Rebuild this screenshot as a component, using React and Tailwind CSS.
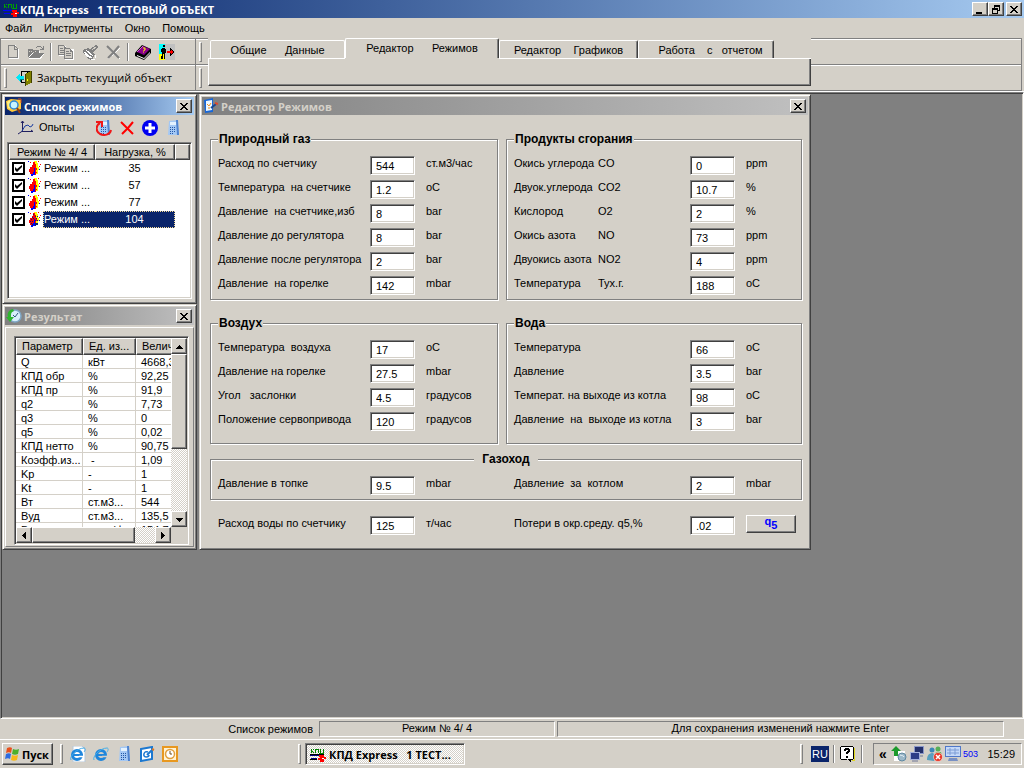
import React, { useState } from 'react';
import clsx from 'clsx';

const raised =
  'border border-t-white border-l-white border-b-[#404040] border-r-[#404040] shadow-[inset_-1px_-1px_0_#808080] bg-[#d4d0c8]';
const sunken =
  'border border-t-[#808080] border-l-[#808080] border-b-white border-r-white shadow-[inset_1px_1px_0_#404040,inset_-1px_-1px_0_#d4d0c8]';
const thinSunken = 'border border-t-[#808080] border-l-[#808080] border-b-white border-r-white';
const dither = 'bg-[repeating-conic-gradient(#ffffff_0_25%,#d4d0c8_0_50%)] bg-[length:2px_2px]';
const uiBold = "font-['Open_Sans','Noto_Sans',sans-serif] font-bold text-[11px]";

const gasFields = [
  { label: 'Расход по счетчику', value: '544', unit: 'ст.м3/час' },
  { label: 'Температура  на счетчике', value: '1.2', unit: 'oC' },
  { label: 'Давление  на счетчике,изб', value: '8', unit: 'bar' },
  { label: 'Давление до регулятора', value: '8', unit: 'bar' },
  { label: 'Давление после регулятора', value: '2', unit: 'bar' },
  { label: 'Давление  на горелке', value: '142', unit: 'mbar' },
];

const combustionFields = [
  { label: 'Окись углерода', formula: 'CO', value: '0', unit: 'ppm' },
  { label: 'Двуок.углерода', formula: 'CO2', value: '10.7', unit: '%' },
  { label: 'Кислород', formula: 'O2', value: '2', unit: '%' },
  { label: 'Окись азота', formula: 'NO', value: '73', unit: 'ppm' },
  { label: 'Двуокись азота', formula: 'NO2', value: '4', unit: 'ppm' },
  { label: 'Температура', formula: 'Тух.г.', value: '188', unit: 'oC' },
];

const airFields = [
  { label: 'Температура  воздуха', value: '17', unit: 'oC' },
  { label: 'Давление на горелке', value: '27.5', unit: 'mbar' },
  { label: 'Угол   заслонки', value: '4.5', unit: 'градусов' },
  { label: 'Положение сервопривода', value: '120', unit: 'градусов' },
];

const waterFields = [
  { label: 'Температура', value: '66', unit: 'oC' },
  { label: 'Давление', value: '3.5', unit: 'bar' },
  { label: 'Температ. на выходе из котла', value: '98', unit: 'oC' },
  { label: 'Давление  на  выходе из котла', value: '3', unit: 'bar' },
];

const results = [
  ['Q', 'кВт', '4668,3'],
  ['КПД обр', '%', '92,25'],
  ['КПД пр', '%', '91,9'],
  ['q2', '%', '7,73'],
  ['q3', '%', '0'],
  ['q5', '%', '0,02'],
  ['КПД нетто', '%', '90,75'],
  ['Коэфф.из...', ' -', '1,09'],
  ['Kp', '-', '1'],
  ['Kt', '-', '1'],
  ['Вт', 'ст.м3...', '544'],
  ['Вуд', 'ст.м3...', '135,5'],
  ['Ву', 'кг у.т/ф', '154,7'],
];

/* ---------- icons ---------- */

const Svg = ({ children, size = 16, crisp = true }) => (
  <svg
    width={size}
    height={size}
    viewBox="0 0 16 16"
    fill="none"
    shapeRendering={crisp ? 'crispEdges' : 'auto'}
    className="shrink-0"
    aria-hidden="true"
  >
    {children}
  </svg>
);

const AppIcon = ({ dark }) => (
  <Svg>
    <path d="M1 3v4M1 5h2M3 3v1M3 6v1M5 7V3h3v4M10 3v4M13 3v4M9 7h5" stroke={dark ? '#008000' : '#00a000'} />
    <path d="M0 10l3-1 3 1 3-1M1 12h6" stroke={dark ? '#000080' : '#0000ff'} />
    <path d="M9 9h5v2h2v2h-2v3h-4v-2H8v-2h2z" fill="#ff0000" />
    <path d="M12 12h2v1h-2z" fill="#fff" />
    {dark && <path d="M0 8h14M0 13h7" stroke="#000" />}
  </Svg>
);

const NewIcon = () => (
  <Svg>
    <path d="M3 1.500h7M12.500 5v9.500H3" stroke="#fff" />
    <path d="M2 1h7v1H3v11h8V5h1v9H2zM8 2h1v3h3v1H8zM9 2h1v1H9zM10 3h1v1h-1zM11 4h1v1h-1z" fill="#808080" />
  </Svg>
);

const OpenIcon = () => (
  <Svg>
    <path d="M1 15V6h4l1 1h6v3h4l-3 5z" fill="#fff" />
    <path d="M0 14V5h4l1 1h6v3H4z" fill="#808080" />
    <path d="M1 14l4-5h11l-4 5z" fill="#808080" />
    <path d="M1 7h1v1H1zM3 7h1v1H3zM5 8h1v1H5zM7 7h1v1H7z" fill="#d4d0c8" />
    <path d="M8 3h1V2h4v1h1v1h1V2h1v4h-4V5h2V4h-1V3H9v1H8z" fill="#808080" />
  </Svg>
);

const CopyIcon = () => (
  <Svg>
    <path d="M1 2h7v10H1zM7 5h9v11H7z" fill="#fff" />
    <path d="M0 1h6v1h1v1h1v8H0z" fill="#808080" />
    <path d="M1 2h5v2h1v6H1z" fill="#d4d0c8" />
    <path d="M2 4h3v1H2zM2 6h4v1H2zM2 8h4v1H2z" fill="#808080" />
    <path d="M6 4h6v1h1v1h1v1h1v8H6z" fill="#808080" />
    <path d="M7 5h5v3h2v6H7z" fill="#d4d0c8" />
    <path d="M8 7h3v1H8zM8 9h5v1H8zM8 11h5v1H8z" fill="#808080" />
  </Svg>
);

const BrushIcon = () => (
  <Svg>
    <path d="M14 1l2 2-5 6-3-4z" fill="#808080" />
    <path d="M14 3l-4 3" stroke="#d4d0c8" />
    <path d="M1 6l5-2 7 6-3 6-4-1-2-4-3-2z" fill="#808080" />
    <path d="M2 8l8 6M4 6l7 6M3 10l5 4" stroke="#fff" />
    <path d="M9 15h4v1H9zM13 11h1v3h-1z" fill="#fff" />
  </Svg>
);

const CrossIcon = ({ color = '#808080', light }) => (
  <Svg>
    {light && <path d="M3 4l12 11M15 4L3 15" stroke="#fff" />}
    <path d="M2 2l12 12M14 2L9 8l-6 6" stroke={color} strokeWidth="2" shapeRendering="auto" />
  </Svg>
);

const BookIcon = () => (
  <Svg crisp={false}>
    <path d="M0 9l7-8 9 4v4l-7 7-9-4z" fill="#000" />
    <path d="M2 8l6-6 7 3-6 6z" fill="#8a008a" />
    <path d="M2 11l7 3 6-6v1l-6 6-7-3z" fill="#fff" />
    <path d="M2 8l6-6" stroke="#d060d0" />
    <path d="M8 4h2v2H9v1M8 8h1" stroke="#ffff00" />
  </Svg>
);

const ExitIcon = () => (
  <Svg>
    <path d="M0 0h6v10H0z" fill="#00ffff" />
    <path d="M0 10h6v6H0z" fill="#ffff00" />
    <path d="M6 0h10v16H6z" fill="#c0c0c0" />
    <path d="M4 1h2v2H4zM3 4h3v1h1v4H6v1H3zM2 5h1v3H2zM3 10h1v5H2v-3h1zM5 10h1v5H5z" fill="#000" />
    <path d="M8 7h3V4h1v1h1v1h1v1h1v2h-1v1h-1v1h-1v1h-1V9H8z" fill="#000" />
    <path d="M8 7h4V6h1v1h1v2h-1v1h-1V9H8z" fill="#ff0000" />
  </Svg>
);

const DoorIcon = () => (
  <Svg>
    <path d="M5 1h11v12H5z" fill="#000" />
    <path d="M6 2h5v10H6z" fill="#d4d0c8" />
    <path d="M9 4l6-3v12l-6 3z" fill="#808000" />
    <path d="M9 4h1v12H9zM15 1h1v12h-1z" fill="#404000" />
    <path d="M11 9h1v2h-1z" fill="#ffff00" />
    <path d="M0 7h1V6h1V5h1V4h1v2h4v3H4v2H3v-1H2V9H1V8H0z" fill="#00e8f8" />
    <path d="M4 9h4v1H5v2H4z" fill="#008080" />
  </Svg>
);

const CurveIcon = () => (
  <Svg crisp={false}>
    <path d="M4.500 1v10L0 14M4 11.500h11M3 3l1.500-2L6 3M13 10l2 1.500" stroke="#202060" />
    <path d="M4 11l3-5 3-1 2 2 2-1 1-2" stroke="#2040a0" />
  </Svg>
);

const CalcIcon = ({ refresh }) => (
  <Svg crisp={false}>
    <path d="M4 1l9-1 1 15H3z" fill="#a4c8f4" />
    <path d="M11 0h2l1 15h-2z" fill="#4f83cf" />
    <path d="M5 2h6v3H5z" fill="#e4f2ff" />
    <path d="M5 7h1v1H5zM7 7h1v1H7zM9 7h1v1H9zM5 9h1v1H5zM7 9h1v1H7zM9 9h1v1H9zM5 11h1v1H5zM7 11h1v1H7zM9 11h1v1H9zM5 13h1v1H5zM7 13h1v1H7z" fill="#2458a8" />
    {refresh && (
      <>
        <path d="M4 3C0 5-1 11 4 14c4 2 10 1 11-4" stroke="#f01818" strokeWidth="2" />
        <path d="M0 2h6v5" stroke="#f01818" strokeWidth="2" />
      </>
    )}
  </Svg>
);

const PlusIcon = () => (
  <Svg crisp={false}>
    <circle cx="8" cy="8" r="8" fill="#0000f0" />
    <path d="M8 3v10M3 8h10" stroke="#fff" strokeWidth="3" />
  </Svg>
);

const FlameIcon = ({ selected }) => (
  <Svg>
    <path d="M2 1h1v1H2zM10 0h1v1h-1zM4 4h1v1H4zM11 5h1v1h-1zM12 3h1v1h-1z" fill="#ff0000" />
    <path d="M0 0h1v1H0zM5 1h1v1H5zM3 6h1v1H3zM11 8h1v1h-1z" fill="#0000ff" />
    <path d="M6 0h3v2h1v4h1v3h-1v4H8V6H7V3H6z" fill="#ffff00" />
    <path d="M5 1h2v2h1v4h1v5H8v2H3v-1H2v-2H1V8h1V6h2V4h1z" fill="#ff0000" />
    <path d="M6 7h1v7H5v-3h1zM3 13h2v2H3z" fill="#0000ff" />
    <path d="M8 9h1v2H8z" fill="#ffff00" />
    {selected && (
      <path
        d="M5 2h1v1H5zM7 4h1v1H7zM9 4h1v1H9zM4 5h1v1H4zM8 6h1v1H8zM3 7h1v1H3zM5 6h1v1H5zM9 8h1v1H9zM2 9h1v1H2zM4 9h1v1H4zM3 11h1v1H3zM7 8h1v1H7zM8 11h2v2H8zM7 11h1v3H7zM4 12h1v2H4z"
        fill="#0a246a"
      />
    )}
  </Svg>
);

const FolderSearchIcon = () => (
  <Svg crisp={false}>
    <path d="M0 3l5-2 10 1v9l-9 3-5-3z" fill="#ffc83a" />
    <path d="M1 4l3-2v9l-2-1z" fill="#fff080" />
    <circle cx="8" cy="7" r="4" fill="#c8f4ff" stroke="#2b88d8" strokeWidth="1.500" />
    <path d="M11 10l3 5" stroke="#904010" strokeWidth="2" />
    <path d="M12 1h3v4" stroke="#d05020" />
  </Svg>
);

const ClockIcon = () => (
  <Svg crisp={false}>
    <circle cx="9" cy="8" r="6" fill="#d8eefa" stroke="#7ea6c4" strokeWidth="1.500" />
    <path d="M12 5L9 9 7 7" stroke="#305878" />
    <path d="M7 1C2 2 1 6 2 9H0l4 5 4-5H5C5 6 5 4 8 3z" fill="#2fb52f" />
  </Svg>
);

const EditorIcon = () => (
  <Svg crisp={false}>
    <path d="M1 2l9-2v14l-8 1z" fill="#1767d8" />
    <path d="M3 3l6-1v10l-6 1z" fill="#eef8ff" />
    <path d="M4 6l2 2 2-3M5 10h2" stroke="#f09020" />
    <path d="M8 10l5-4" stroke="#1a4890" strokeWidth="2" />
    <path d="M12 5l3 1" stroke="#e04828" strokeWidth="2" />
  </Svg>
);

const WindowsIcon = () => (
  <Svg crisp={false}>
    <path d="M2 2c2-1 4-1 5 0L6 7C5 6 3 6 1 7z" fill="#e8501c" />
    <path d="M8 3c2 1 4 1 6 0l-1 5c-2 1-4 1-6 0z" fill="#4cb02c" />
    <path d="M1 8c2-1 4-1 5 0l-1 5c-1-1-3-1-5 0z" fill="#2c6ce0" />
    <path d="M7 9c2 1 4 1 6 0l-1 5c-2 1-4 1-6 0z" fill="#f8b818" />
  </Svg>
);

const IeIcon = ({ page }) => (
  <Svg crisp={false}>
    {page && <path d="M3 0h9l3 3v13H3z" fill="#fff" stroke="#b8c8d8" />}
    <circle cx={page ? 7 : 8} cy="9" r="4.500" stroke="#1f86dc" strokeWidth="3" />
    <path d="M3 8h10v2H3z" fill="#1f86dc" />
    <path d="M9 10.500h5" stroke={page ? '#fff' : '#d4d0c8'} strokeWidth="1.500" />
    <path d="M1 14C-1 11 7 2 14 2c2 0 1 3 0 4" stroke={page ? '#3fa8e8' : '#48b0e8'} />
  </Svg>
);

const OutlookIcon = () => (
  <Svg crisp={false}>
    <path d="M2 3l11-2v12L2 15z" fill="#fff" stroke="#1c78d0" strokeWidth="2" />
    <path d="M9 6C5 4 3 11 7 11c2 0 3-1 3-2" stroke="#1c78d0" strokeWidth="1.500" />
    <path d="M8 9l5-5" stroke="#1c78d0" strokeWidth="2" />
    <path d="M13 3l2 1" stroke="#e07820" strokeWidth="2" />
  </Svg>
);

const OrangeClockIcon = () => (
  <Svg crisp={false}>
    <path d="M1 1h14v14H1z" fill="#fff3d4" stroke="#e89820" strokeWidth="2" />
    <circle cx="8" cy="8" r="4.500" fill="#fff" stroke="#e0a040" strokeWidth="1.500" />
    <path d="M8 5v3h2" stroke="#705020" />
  </Svg>
);

const UpdateIcon = () => (
  <Svg crisp={false}>
    <path d="M3 5h11v10H3z" fill="#fff" />
    <path d="M5 0l5 5H7v5H3V5H0z" fill="#1c9a2c" />
    <circle cx="11" cy="11" r="4" fill="#9cb8c8" stroke="#6088a0" />
    <path d="M9 9c2 1 3 0 4 2" stroke="#e8f4fa" />
  </Svg>
);

const NetworkIcon = () => (
  <Svg crisp={false}>
    <path d="M5 0h10v8H5z" fill="#8c98c8" />
    <path d="M6 1h8v6H6z" fill="#24306c" />
    <path d="M1 6h10v8H1z" fill="#a4b0dc" />
    <path d="M2 7h8v6H2z" fill="#2c3c88" />
    <path d="M3 15h6M11 10h3" stroke="#707898" />
  </Svg>
);

const MessengerIcon = () => (
  <Svg crisp={false}>
    <circle cx="11" cy="3" r="2.500" fill="#58b058" />
    <path d="M7 10l2-4 5 0 1 5z" fill="#58b058" />
    <circle cx="5" cy="4" r="2.500" fill="#3c88b8" />
    <path d="M0 14c0-6 3-7 6-7l3 3-2 5z" fill="#58a0c0" />
    <circle cx="11" cy="11" r="4.500" fill="#e83828" stroke="#fff" strokeWidth="0.500" />
    <path d="M9 9l4 4M13 9l-4 4" stroke="#fff" strokeWidth="1.500" />
  </Svg>
);

const ScreenIcon = () => (
  <Svg crisp={false}>
    <path d="M0 0h16v11H0z" fill="#5078c8" />
    <path d="M1 1h14v9H1z" fill="#c4d8f8" />
    <path d="M2 4h12M2 7h12M5 2v7M10 2v7" stroke="#7c9cd4" />
    <path d="M4 12h8l1 3H3z" fill="#7890c4" />
  </Svg>
);

const HelpIcon = () => (
  <Svg>
    <path d="M1 1h12v12h-3v3L7 13H1z" fill="#fff" />
    <path d="M1 0h12v1H1zM0 1h1v12H0zM1 13h6v1H1zM13 1h1v12h-1zM10 13h3v1h-2v2h-1v-1H9v-1H8v-1h2z" fill="#000" />
    <path d="M14 2h1v13h-3v-1h2z" fill="#e0d820" />
    <path d="M4 3h1V2h4v1h1v3H9v1H8v1H6V6h1V5h1V4H6v1H4zM6 10h2v2H6z" fill="#000" />
  </Svg>
);

/* ---------- shared parts ---------- */

const CaptionButton = ({ label, children }) => (
  <button aria-label={label} className={clsx('flex items-center justify-center w-4 h-3.5', raised)}>
    <svg width="10" height="9" viewBox="0 0 10 9" fill="none" stroke="#000" shapeRendering="crispEdges" aria-hidden="true">
      {children}
    </svg>
  </button>
);

const closeGlyph = (
  <path
    d="M1 1h2v1h1v1h2V2h1V1h2v1H8v1H7v1H6v1h1v1h1v1h1v1H7V7H6V6H4v1H3v1H1V7h1V6h1V5h1V4H3V3H2V2H1z"
    fill="#000"
    stroke="none"
  />
);

const ToolWindow = ({ title, icon, active, className, children }) => (
  <section
    className={clsx(
      'flex flex-col p-0.5 bg-[#d4d0c8] border border-t-[#d4d0c8] border-l-[#d4d0c8] border-b-[#404040] border-r-[#404040] shadow-[inset_1px_1px_0_#fff,inset_-1px_-1px_0_#808080]',
      className
    )}
  >
    <header
      className={clsx(
        'flex items-center h-[18px] pl-px pr-0.5 gap-0.5 bg-linear-to-r shrink-0',
        active ? 'from-[#0a246a] to-[#a6caf0] text-white' : 'from-[#808080] to-[#c0c0c0] text-[#d4d0c8]'
      )}
    >
      {icon}
      <h2 className={clsx('flex-1 whitespace-pre', uiBold)}>{title}</h2>
      <CaptionButton label="Закрыть">{closeGlyph}</CaptionButton>
    </header>
    {children}
  </section>
);

const Grip = ({ className }) => (
  <div className={clsx('w-[3px] border border-t-white border-l-white border-b-[#808080] border-r-[#808080]', className)} />
);

const Separator = () => <div className="w-0.5 h-[18px] bg-white border-l border-[#808080]" />;

const ToolButton = ({ label, children }) => (
  <button aria-label={label} title={label} className="flex items-center">
    {children}
  </button>
);

const Field = ({ id, label, formula, value, unit, wide, children }) => {
  const [text, setText] = useState(value);
  return (
    <div className={clsx('grid h-6 items-center', wide ? 'grid-cols-[176px_45px_1fr]' : 'grid-cols-[152px_45px_1fr]')}>
      <label htmlFor={id} className="flex whitespace-pre">
        <span className={clsx(formula && 'w-[84px]')}>{label}</span>
        {formula}
      </label>
      <input
        id={id}
        value={text}
        onChange={(e) => setText(e.target.value)}
        className={clsx('self-end w-full h-[19px] pl-[5px] bg-white outline-none', sunken)}
      />
      {children || <span className="pl-[11px]">{unit}</span>}
    </div>
  );
};

const Group = ({ title, center, className, children }) => (
  <fieldset
    className={clsx(
      'min-w-0 px-[7px] border border-[#808080] shadow-[1px_1px_0_#fff,inset_1px_1px_0_#fff]',
      className
    )}
  >
    <legend className={clsx('h-3.5 leading-3.5 font-bold text-[12px] bg-[#d4d0c8]', center ? 'mx-auto px-2' : 'px-px')}>
      {title}
    </legend>
    {children}
  </fieldset>
);

const Arrow = ({ dir }) => {
  const shapes = {
    up: 'M3 0h1v1h1v1h1v1h1v1H0V3h1V2h1V1h1z',
    down: 'M0 0h7v1H6v1H5v1H4v1H3V3H2V2H1V1H0z',
    left: 'M3 0h1v7H3V6H2V5H1V4H0V3h1V2h1V1h1z',
    right: 'M0 0h1v1h1v1h1v1h1v1H3v1H2v1H1v1H0z',
  };
  return (
    <svg width="7" height="7" viewBox={dir === 'up' || dir === 'down' ? '0 -2 7 7' : '-1 0 7 7'} shapeRendering="crispEdges" aria-hidden="true">
      <path d={shapes[dir]} fill="#000" />
    </svg>
  );
};

const ScrollButton = ({ dir, label }) => (
  <button aria-label={label} className={clsx('flex items-center justify-center size-4 shrink-0', raised)}>
    <Arrow dir={dir} />
  </button>
);

/* ---------- windows ---------- */

const ModesWindow = () => {
  const [modes, setModes] = useState([
    { load: 35, checked: true },
    { load: 57, checked: true },
    { load: 77, checked: true },
    { load: 104, checked: true },
  ]);
  const [selected, setSelected] = useState(3);

  const toggle = (index) =>
    setModes(modes.map((m, i) => (i === index ? { ...m, checked: !m.checked } : m)));

  return (
    <ToolWindow title="Список режимов" icon={<FolderSearchIcon />} active className="h-[210px]">
      <div className="flex items-center h-[25px] pl-[13px]">
        <button className="flex items-center gap-[5px] w-[78px]">
          <CurveIcon />
          Опыты
        </button>
        <div className="flex items-center gap-[7px]">
          <ToolButton label="Пересчитать"><CalcIcon refresh /></ToolButton>
          <ToolButton label="Удалить"><CrossIcon color="#ff0000" /></ToolButton>
          <ToolButton label="Добавить"><PlusIcon /></ToolButton>
          <ToolButton label="Калькулятор"><CalcIcon /></ToolButton>
        </div>
      </div>
      <div className={clsx('flex-1 mx-0.5 mt-0.5 mb-0.5 p-px bg-white overflow-hidden', sunken)}>
        <table className="w-full table-fixed border-separate border-spacing-0">
          <colgroup>
            <col className="w-[34px]" />
            <col className="w-[52px]" />
            <col className="w-20" />
            <col />
          </colgroup>
          <thead>
            <tr className="h-4">
              <th colSpan="2" className={clsx('p-0 font-normal', raised)}>Режим № 4/ 4</th>
              <th className={clsx('p-0 font-normal', raised)}>Нагрузка, %</th>
              <th className={clsx('p-0', raised)} />
            </tr>
          </thead>
          <tbody>
            {modes.map((mode, i) => {
              const on = i === selected;
              return (
                <tr key={mode.load} onClick={() => setSelected(i)} className="h-[17px]">
                  <td className="p-0">
                    <div className="flex items-center pl-[3px] gap-[3px]">
                      <input
                        type="checkbox"
                        aria-label={`Режим ${i + 1}`}
                        checked={mode.checked}
                        onChange={() => toggle(i)}
                        className="appearance-none size-[13px] shrink-0 border-2 border-black bg-white checked:bg-[url('data:image/svg+xml,%3Csvg%20xmlns=%22http://www.w3.org/2000/svg%22%20viewBox=%220%200%209%209%22%3E%3Cpath%20d=%22M1%203v3l2%202%205-5V1L3%205z%22/%3E%3C/svg%3E')]"
                      />
                      <FlameIcon selected={on} />
                    </div>
                  </td>
                  <td className={clsx('p-0 border border-r-0', on ? 'bg-[#0a246a] text-white border-dotted border-[#f5db95]' : 'border-transparent')}>
                    Режим ...
                  </td>
                  <td className={clsx('p-0 border border-l-0 text-center', on ? 'bg-[#0a246a] text-white border-dotted border-[#f5db95]' : 'border-transparent')}>
                    {mode.load}
                  </td>
                  <td className="p-0" />
                </tr>
              );
            })}
          </tbody>
        </table>
      </div>
    </ToolWindow>
  );
};

const ResultWindow = () => (
  <ToolWindow title="Результат" icon={<ClockIcon />} className="flex-1">
    <div className="flex-1 flex mt-0.5 pt-2 pl-2 pr-1 border border-t-white border-l-white border-b-[#808080] border-r-[#808080]">
      <div className={clsx('flex-1 min-w-0 flex flex-col p-px h-[209px] bg-white', sunken)}>
        <div className="flex flex-1 min-h-0">
          <div className="flex-1 min-w-0 overflow-hidden">
            <table className="w-[204px] table-fixed border-separate border-spacing-0">
              <colgroup>
                <col className="w-[67px]" />
                <col className="w-[53px]" />
                <col className="w-[84px]" />
              </colgroup>
              <thead>
                <tr className="h-[17px]">
                  <th className={clsx('p-0 pl-[5px] font-normal text-left', raised)}>Параметр</th>
                  <th className={clsx('p-0 pl-[5px] font-normal text-left', raised)}>Ед. из...</th>
                  <th className={clsx('p-0 pl-[5px] font-normal text-left', raised)}>Величина</th>
                </tr>
              </thead>
              <tbody>
                {results.map((row) => (
                  <tr key={row[0]} className="h-3.5 leading-3">
                    {row.map((cell, i) => (
                      <td key={i} className="p-0 pl-[5px] whitespace-pre border-b border-r border-[#d4d0c8]">
                        {cell}
                      </td>
                    ))}
                  </tr>
                ))}
              </tbody>
            </table>
          </div>
          <div className={clsx('flex flex-col w-4', dither)}>
            <ScrollButton dir="up" label="Вверх" />
            <div className={clsx('h-[95px]', raised)} />
            <div className="flex-1" />
            <ScrollButton dir="down" label="Вниз" />
          </div>
        </div>
        <div className="flex bg-[#d4d0c8]">
          <div className={clsx('flex flex-1', dither)}>
            <ScrollButton dir="left" label="Влево" />
            <div className={clsx('w-[103px] h-4', raised)} />
            <div className="flex-1" />
            <ScrollButton dir="right" label="Вправо" />
          </div>
          <div className="w-4" />
        </div>
      </div>
    </div>
  </ToolWindow>
);

const EditorWindow = () => (
  <ToolWindow title="Редактор Режимов" icon={<EditorIcon />} className="w-[612px]">
    <div className="grid grid-cols-[288px_1fr] gap-x-2 gap-y-4 pt-[17px] pl-2 pr-1.5">
      <Group title="Природный газ" className="pt-[5px] pb-1">
        {gasFields.map((f, i) => <Field key={i} id={`gas-${i}`} {...f} />)}
      </Group>
      <Group title="Продукты сгорания" className="pt-[5px] pb-1">
        {combustionFields.map((f, i) => <Field key={i} id={`smoke-${i}`} wide {...f} />)}
      </Group>
      <Group title="Воздух" className="pt-[5px] pb-3">
        {airFields.map((f, i) => <Field key={i} id={`air-${i}`} {...f} />)}
      </Group>
      <Group title="Вода" className="pt-[5px] pb-3">
        {waterFields.map((f, i) => <Field key={i} id={`water-${i}`} wide {...f} />)}
      </Group>
    </div>
    <div className="pt-2 pl-2 pr-1.5">
      <Group title="Газоход" center className="pt-[5px] pb-1">
        <div className="grid grid-cols-[288px_1fr] gap-x-2">
          <Field id="furnace" label="Давление в топке" value="9.5" unit="mbar" />
          <Field id="boiler" label="Давление  за  котлом" value="2" unit="mbar" wide />
        </div>
      </Group>
      <div className="grid grid-cols-[288px_1fr] gap-x-2 pt-[11px] px-2 pb-3">
        <Field id="flow" label="Расход воды по счетчику" value="125" unit="т/час" />
        <Field id="loss" label="Потери в окр.среду. q5,%" value=".02" wide>
          <button
            className={clsx('flex justify-center items-center self-end mb-0.5 ml-[11px] w-[50px] h-[18px] leading-3 text-[#0000ff] font-bold', raised)}
          >
            <span className="pb-1.5">q</span>
            <span className="pt-0.5">5</span>
          </button>
        </Field>
      </div>
    </div>
  </ToolWindow>
);

/* ---------- main frame ---------- */

const tabs = [
  { text: 'Общие      Данные', width: 'w-[135px]' },
  { text: 'Редактор      Режимов', width: 'w-[154px]' },
  { text: 'Редактор    Графиков', width: 'w-[139px]' },
  { text: '   Работа    с   отчетом', width: 'w-[136px]' },
];

const TabBar = () => {
  const [current, setCurrent] = useState(1);
  return (
    <div className="w-[603px] flex flex-col">
      <div className="flex items-end h-5 pl-0.5" role="tablist">
        {tabs.map((tab, i) => (
          <button
            key={tab.text}
            role="tab"
            aria-selected={i === current}
            onClick={() => setCurrent(i)}
            className={clsx(
              'whitespace-pre rounded-t-xs border border-b-0 border-t-white border-l-white border-r-[#404040] shadow-[inset_-1px_0_0_#808080]',
              tab.width,
              i === current ? 'h-5' : 'h-[18px] pt-0.5',
              i === 0 && 'border-r-white shadow-none'
            )}
          >
            {tab.text}
          </button>
        ))}
      </div>
      <div className="flex">
        <div className="w-[137px] border-t border-white" />
        <div className="w-[154px]" />
        <div className="flex-1 border-t border-white" />
      </div>
      <div className="h-[27px] border border-t-0 border-l-white border-b-[#404040] border-r-[#404040] shadow-[inset_-1px_-1px_0_#808080]" />
    </div>
  );
};

const band = 'flex items-center h-[26px] border-b border-[#808080] shadow-[inset_0_1px_0_#fff]';

const Toolbars = () => (
  <div className="flex shrink-0 border-b border-white">
    <div className="w-[196px] border-t border-[#808080]">
      <div className={clsx(band, 'pl-[5px] border-l border-r')}>
        <ToolButton label="Новый"><NewIcon /></ToolButton>
        <div className="w-1.5" />
        <ToolButton label="Открыть"><OpenIcon /></ToolButton>
        <div className="flex justify-center w-3.5"><Separator /></div>
        <ToolButton label="Копировать"><CopyIcon /></ToolButton>
        <div className="w-2" />
        <ToolButton label="Формат"><BrushIcon /></ToolButton>
        <div className="w-[7px]" />
        <ToolButton label="Удалить"><CrossIcon light /></ToolButton>
        <div className="flex justify-center w-3.5"><Separator /></div>
        <ToolButton label="Справка"><BookIcon /></ToolButton>
        <div className="w-2" />
        <ToolButton label="Выход"><ExitIcon /></ToolButton>
      </div>
      <div className={clsx(band, 'pl-[3px] border-l border-r')}>
        <Grip className="h-5" />
        <button className="flex items-center gap-[5px] pl-[9px] font-['Open_Sans',sans-serif] text-[11px]">
          <DoorIcon />
          Закрыть текущий объект
        </button>
      </div>
    </div>
    <div className="w-3 border-t border-[#808080]">
      <div className={clsx(band, 'pl-[3px]')}><Grip className="h-5" /></div>
      <div className={clsx(band, 'pl-[3px]')}><Grip className="h-5" /></div>
    </div>
    <div className="border-b border-[#808080]">
      <TabBar />
    </div>
    <div className="flex-1 pr-0.5">
      <div className="border-t border-r border-[#808080]">
        <div className={band} />
        <div className={band} />
      </div>
    </div>
  </div>
);

const App = () => (
  <div className="flex flex-col min-h-screen bg-[#d4d0c8] text-black text-[11px] leading-[13px] font-['Liberation_Sans',Arial,sans-serif] select-none">
    <header className="flex items-center h-[18px] pl-[3px] pr-0.5 gap-px bg-linear-to-r from-[#0a246a] to-[#a6caf0] text-white">
      <AppIcon />
      <h1 className={clsx('flex-1 whitespace-pre', uiBold)}>КПД Express   1 ТЕСТОВЫЙ ОБЪЕКТ</h1>
      <div className="flex">
        <CaptionButton label="Свернуть"><path d="M1 7h6v2H1z" fill="#000" stroke="none" /></CaptionButton>
        <CaptionButton label="Восстановить">
          <path d="M3 0h6v6H7V5h1V2H4v1H3zM1 3h6v6H1zM2 5v3h4V5z" fill="#000" fillRule="evenodd" stroke="none" />
        </CaptionButton>
      </div>
      <div className="pl-px">
        <CaptionButton label="Закрыть">{closeGlyph}</CaptionButton>
      </div>
    </header>

    <nav className="flex items-center gap-3 h-5 pl-[5px]">
      <button>Файл</button>
      <button>Инструменты</button>
      <button>Окно</button>
      <button>Помощь</button>
    </nav>

    <Toolbars />

    <main className={clsx('flex-1 flex items-start p-px pr-0 gap-0.5 bg-[#808080]', sunken)}>
      <div className="flex flex-col w-[195px] h-[456px]">
        <ModesWindow />
        <ResultWindow />
      </div>
      <EditorWindow />
    </main>

    <footer className="flex items-center h-[21px] gap-0.5 pr-5 border-b border-white text-center">
      <div className="w-[317px] pr-1 text-right">Список режимов</div>
      <div className={clsx('w-[236px] h-4', thinSunken)}>Режим № 4/ 4</div>
      <div className={clsx('flex-1 h-4', thinSunken)}>Для сохранения изменений нажмите Enter</div>
    </footer>

    <div className="flex items-center h-7 pl-0.5 pr-0.5">
      <button className={clsx('flex items-center gap-px w-[51px] h-[22px] pl-0.5', raised, uiBold)}>
        <WindowsIcon />
        Пуск
      </button>
      <Grip className="h-5 ml-[7px]" />
      <div className="flex items-center gap-[7px] pl-[7px] w-[235px]">
        <ToolButton label="Обозреватель"><IeIcon page /></ToolButton>
        <ToolButton label="Internet Explorer"><IeIcon /></ToolButton>
        <ToolButton label="Калькулятор"><CalcIcon /></ToolButton>
        <ToolButton label="Outlook Express"><OutlookIcon /></ToolButton>
        <ToolButton label="Часы"><OrangeClockIcon /></ToolButton>
      </div>
      <Grip className="h-5" />
      <button className={clsx('flex items-center gap-[3px] ml-1 w-40 h-[22px] pl-1 whitespace-pre', sunken, dither, uiBold)}>
        <AppIcon dark />
        КПД Express   1 ТЕСТ...
      </button>
      <div className="flex-1" />
      <Grip className="h-5" />
      <button className="ml-2 mr-1 w-[18px] h-4 bg-[#0a246a] text-white">RU</button>
      <Separator />
      <div className="px-[5px] flex">
        <ToolButton label="Справка"><HelpIcon /></ToolButton>
      </div>
      <Separator />
      <div className={clsx('flex items-center gap-0.5 ml-2.5 pl-[3px] pr-1.5 w-[149px] h-[22px]', thinSunken)}>
        <button aria-label="Показать значки" className="w-3 text-[14px] font-bold">«</button>
        <UpdateIcon />
        <NetworkIcon />
        <MessengerIcon />
        <ScreenIcon />
        <span className="text-[9px] text-[#0000ff]">503</span>
        <time className="flex-1 text-right">15:29</time>
      </div>
    </div>
  </div>
);

export default App;
